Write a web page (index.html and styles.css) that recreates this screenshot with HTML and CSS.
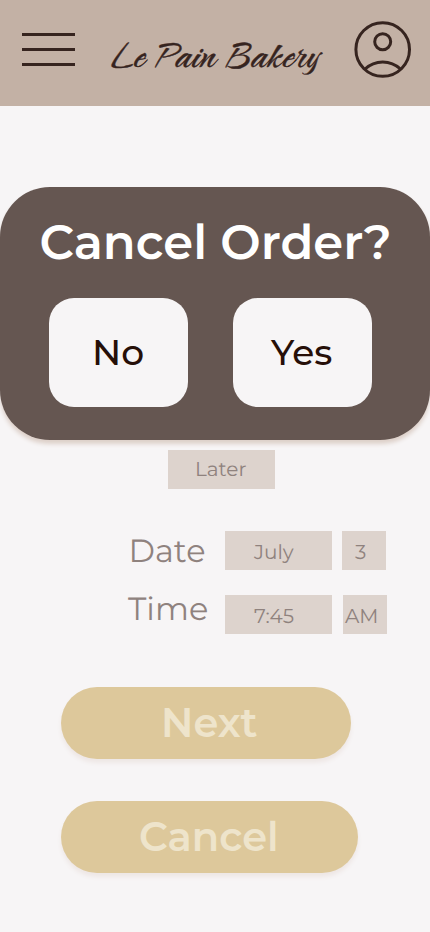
FILE: index.html
```html
<!DOCTYPE html>
<html lang="en">
<head>
<meta charset="utf-8">
<meta name="viewport" content="width=device-width, initial-scale=1">
<title>Le Pain Bakery</title>
<link rel="stylesheet" href="styles.css">
</head>
<body>
<header class="bar">
  <svg class="menu" width="53" height="35" viewBox="0 0 53 35"><path d="M0 2.5h53M0 17.5h53M0 32.5h53"/></svg>
  <span class="brand">Le Pain Bakery</span>
  <svg class="avatar" width="58" height="58" viewBox="0 0 58 58"><circle cx="28.7" cy="29.5" r="26.8"/><circle cx="28.7" cy="21.7" r="8"/><path d="M11 49C21 39.5 36.5 39.5 46.5 49"/></svg>
</header>
<section class="dialog">
  <h1 class="title">Cancel Order?</h1>
  <div class="choices">
    <button class="choice no">No</button>
    <button class="choice yes">Yes</button>
  </div>
</section>
<main class="order">
  <div class="tile later">Later</div>
  <div class="row date">
    <span class="label">Date</span>
    <div class="tile wide">July</div>
    <div class="tile small">3</div>
  </div>
  <div class="row time">
    <span class="label">Time</span>
    <div class="tile wide">7:45</div>
    <div class="tile small">AM</div>
  </div>
  <button class="pill next">Next</button>
  <button class="pill cancel">Cancel</button>
</main>
</body>
</html>
```
FILE: styles.css
```css
* { box-sizing: border-box; }
body { margin: 0; min-height: 932px; background: #f7f5f6; font-family: Montserrat, Inter, sans-serif; text-rendering: geometricPrecision; overflow-x: hidden; }
button { border: 0; font: inherit; text-align: left; }
.bar { height: 106px; background: #c3b1a5; display: flex; align-items: flex-start; padding-left: 22px; }
.bar svg { flex: none; fill: none; stroke: #36241f; stroke-width: 3; }
.menu { margin-top: 32px; }
.brand { width: 243px; margin: 30px 0 0 36px; white-space: nowrap; font: 48px/48px Caramel, cursive; color: #36241f; -webkit-text-stroke: 0.4px #36241f; }
.avatar { margin-top: 20px; }
.dialog { height: 253px; margin-top: 81px; padding-top: 28px; border-radius: 50px; background: #655651; box-shadow: 0 4px 4px #ddd0c9; }
.title { margin: 0; padding-left: 39.5px; font-size: 48px; line-height: 56px; font-weight: 600; color: #fff; }
.choices { display: flex; gap: 45px; margin: 27px 0 0 49px; }
.choice { display: flex; align-items: center; width: 139px; height: 109px; border-radius: 25px; background: #f7f5f6; color: #260f08; font-size: 36px; font-weight: 500; padding: 0 0 1px 43px; }
.yes { padding-left: 38px; }
.order { padding-top: 10px; color: #8f827e; }
.tile { display: flex; align-items: center; height: 39px; background: #ddd3cd; font-size: 20px; font-weight: 400; padding-top: 4px; }
.later { width: 107px; margin-left: 168px; padding: 1px 0 0 27px; }
.row { display: flex; height: 39px; }
.date { margin-top: 42px; padding-left: 128.5px; }
.time { margin-top: 25px; padding-left: 128px; }
.label { width: 97px; display: flex; align-items: center; font-size: 32px; font-weight: 400; }
.date .label { width: 96.5px; padding-top: 2px; }
.time .label { padding-bottom: 10px; }
.wide { width: 107px; padding-left: 29px; }
.small { width: 44px; margin-left: 10px; padding-left: 13px; }
.time .small { margin-left: 11px; padding-left: 2px; }
.pill { display: flex; align-items: center; height: 72px; margin-left: 61px; border-radius: 36px; background: #ddc89b; color: #eee4cb; font-size: 40px; font-weight: 600; box-shadow: 0 4px 4px #eee7e5; }
.next { width: 290px; margin-top: 53px; padding: 0 0 1px 100px; }
.cancel { width: 297px; margin-top: 42px; padding: 0 0 1px 78px; }
```
